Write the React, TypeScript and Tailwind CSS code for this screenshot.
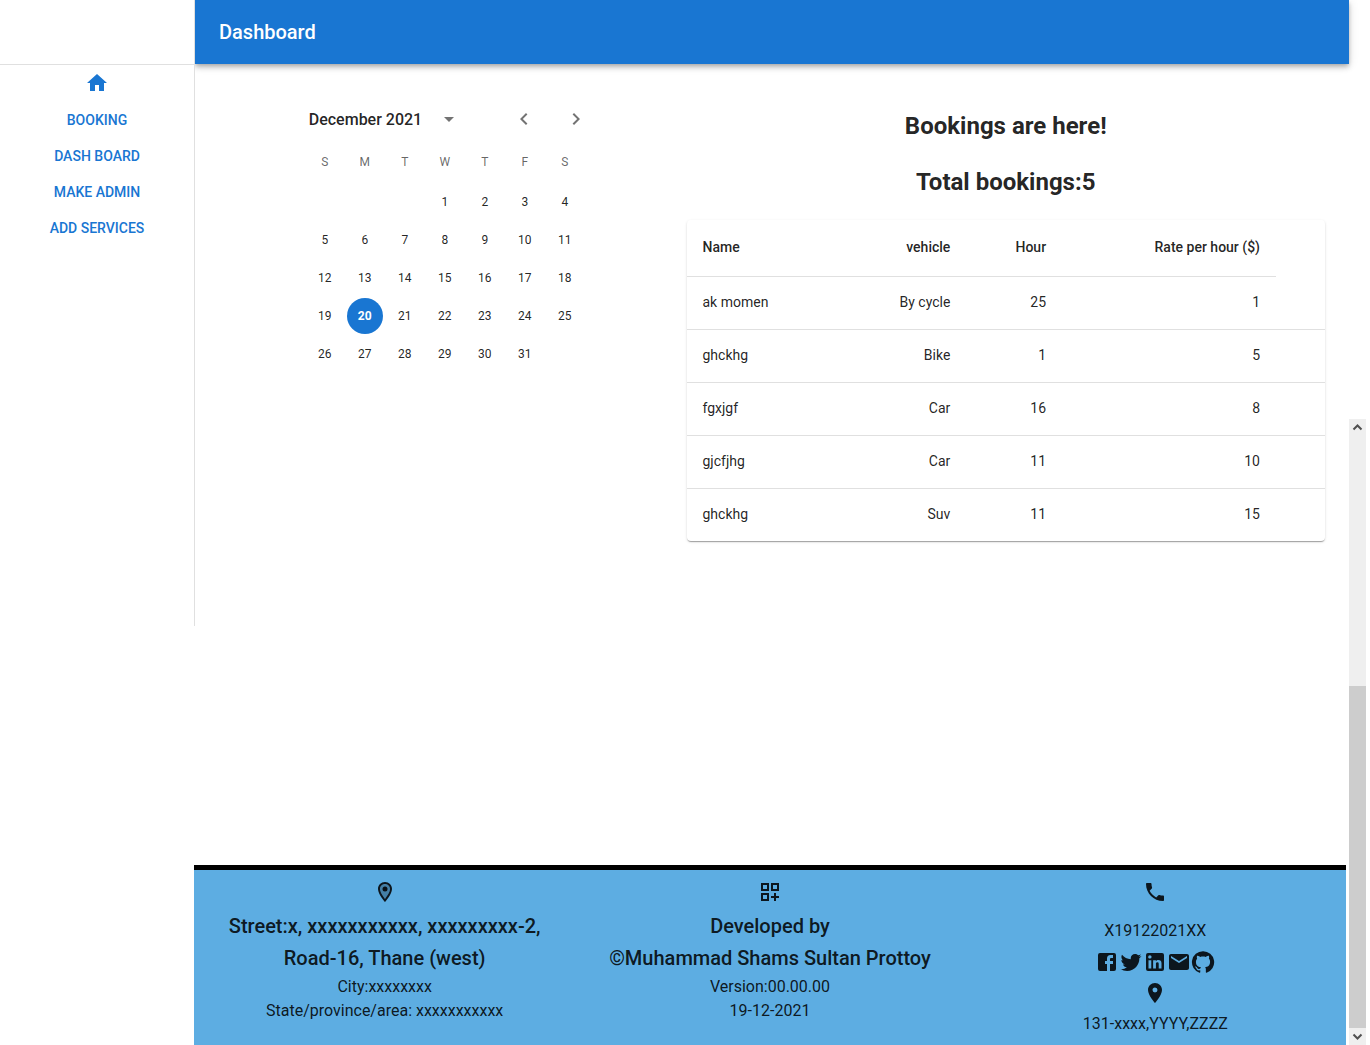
import type { ReactNode } from "react";
import {
  MdArrowDropDown,
  MdChevronLeft,
  MdChevronRight,
  MdEmail,
  MdHome,
  MdLocationOn,
  MdPhone,
} from "react-icons/md";

const navLinks = ["Booking", "Dash Board", "Make Admin", "Add Services"];

const weekdays = ["S", "M", "T", "W", "T", "F", "S"];
const leadingBlanks = 3;
const daysInMonth = 31;
const selectedDay = 20;

const bookings = [
  { name: "ak momen", vehicle: "By cycle", hour: 25, rate: 1 },
  { name: "ghckhg", vehicle: "Bike", hour: 1, rate: 5 },
  { name: "fgxjgf", vehicle: "Car", hour: 16, rate: 8 },
  { name: "gjcfjhg", vehicle: "Car", hour: 11, rate: 10 },
  { name: "ghckhg", vehicle: "Suv", hour: 11, rate: 15 },
];

const socialIcons = [
  {
    label: "Facebook",
    d: "M5 3h14a2 2 0 0 1 2 2v14a2 2 0 0 1-2 2H5a2 2 0 0 1-2-2V5a2 2 0 0 1 2-2m13 2h-2.5A3.5 3.5 0 0 0 12 8.5V11h-2v3h2v7h3v-7h3v-3h-3V9a1 1 0 0 1 1-1h2V5z",
  },
  {
    label: "Twitter",
    d: "M22.46 6c-.77.35-1.6.58-2.46.69.88-.53 1.56-1.37 1.88-2.38-.83.5-1.75.85-2.72 1.05C18.37 4.5 17.26 4 16 4c-2.35 0-4.27 1.92-4.27 4.29 0 .34.04.67.11.98C8.28 9.09 5.11 7.38 3 4.79c-.37.63-.58 1.37-.58 2.15 0 1.49.75 2.81 1.91 3.56-.71 0-1.37-.2-1.95-.5v.03c0 2.08 1.48 3.82 3.44 4.21a4.22 4.22 0 0 1-1.93.07 4.28 4.28 0 0 0 4 2.98 8.521 8.521 0 0 1-5.33 1.84c-.34 0-.68-.02-1.02-.06C3.44 20.29 5.7 21 8.12 21 16 21 20.33 14.46 20.33 8.79c0-.19 0-.37-.01-.56.84-.6 1.56-1.36 2.14-2.23z",
  },
  {
    label: "LinkedIn",
    d: "M19 3a2 2 0 0 1 2 2v14a2 2 0 0 1-2 2H5a2 2 0 0 1-2-2V5a2 2 0 0 1 2-2h14m-.5 15.5v-5.3a3.26 3.26 0 0 0-3.26-3.26c-.85 0-1.84.52-2.32 1.3v-1.11h-2.79v8.37h2.79v-4.93c0-.77.62-1.4 1.39-1.4a1.4 1.4 0 0 1 1.4 1.4v4.93h2.79M6.88 8.56a1.68 1.68 0 0 0 1.68-1.68c0-.93-.75-1.69-1.68-1.69a1.69 1.69 0 0 0-1.69 1.69c0 .93.76 1.68 1.69 1.68m1.39 9.94v-8.37H5.5v8.37h2.77z",
  },
];

const githubPath =
  "M12 1.27a11 11 0 00-3.48 21.46c.55.09.73-.28.73-.55v-1.84c-3.03.64-3.67-1.46-3.67-1.46-.55-1.29-1.28-1.65-1.28-1.65-.92-.65.1-.65.1-.65 1.1 0 1.73 1.1 1.73 1.1.92 1.65 2.57 1.2 3.21.92a2 2 0 01.64-1.47c-2.47-.27-5.04-1.19-5.04-5.5 0-1.1.46-2.1 1.2-2.84a3.76 3.76 0 010-2.93s.91-.28 3.11 1.1c1.8-.49 3.7-.49 5.5 0 2.1-1.38 3.02-1.1 3.02-1.1a3.76 3.76 0 01.1 2.93c.83.74 1.2 1.74 1.2 2.94 0 4.21-2.57 5.13-5.04 5.4.45.37.82.92.82 2.02v3.03c0 .27.1.64.73.55A11 11 0 0012 1.27";

function Icon({ children }: { children: ReactNode }) {
  return (
    <svg viewBox="0 0 24 24" fill="currentColor" className="size-6" aria-hidden="true">
      {children}
    </svg>
  );
}

function Sidebar() {
  return (
    <aside className="z-20 h-[626px] w-[195px] shrink-0 border-r border-[#e0e0e0] bg-white">
      <div className="h-[65px] border-b border-[#e0e0e0]" />
      <nav className="flex flex-col items-center pt-1.5 text-sm font-medium text-[#1976d2] uppercase">
        <a href="#home" aria-label="Home" className="mb-[7px]">
          <MdHome className="size-6" />
        </a>
        {navLinks.map((label) => (
          <a key={label} href="#" className="flex h-9 items-center">
            {label}
          </a>
        ))}
      </nav>
    </aside>
  );
}

function Calendar() {
  const days = Array.from({ length: daysInMonth }, (_, i) => i + 1);
  return (
    <section aria-label="Calendar" className="mx-auto mt-4 w-[280px]">
      <div className="flex h-[30px] items-center pl-1">
        <button type="button" className="flex items-center gap-[15px] text-base font-medium">
          <span className="pt-0.5">December 2021</span>
          <MdArrowDropDown className="size-6 text-black/55" />
        </button>
        <div className="-mr-[3px] ml-auto flex gap-7 text-black/55">
          <button type="button" aria-label="Previous month">
            <MdChevronLeft className="size-6" />
          </button>
          <button type="button" aria-label="Next month">
            <MdChevronRight className="size-6" />
          </button>
        </div>
      </div>
      <div className="mt-2 grid grid-cols-7 text-center text-xs leading-10 text-black/60">
        {weekdays.map((day, i) => (
          <span key={i}>{day}</span>
        ))}
      </div>
      <div className="mt-px grid grid-cols-7 justify-items-center text-xs">
        {days.map((day) => (
          <button
            key={day}
            type="button"
            aria-pressed={day === selectedDay}
            style={day === 1 ? { gridColumnStart: leadingBlanks + 1 } : undefined}
            className={
              day === selectedDay
                ? "my-px size-9 rounded-full bg-[#1976d2] font-bold text-white"
                : "my-px size-9 rounded-full"
            }
          >
            {day}
          </button>
        ))}
      </div>
    </section>
  );
}

function Bookings() {
  return (
    <section className="mt-5">
      <h2 className="text-center text-2xl leading-9 font-bold">Bookings are here!</h2>
      <h2 className="mt-5 text-center text-2xl leading-9 font-bold">
        Total bookings:{bookings.length}
      </h2>
      <div className="mt-5 rounded shadow-[0_2px_1px_-1px_rgba(0,0,0,0.2),0_1px_1px_0_rgba(0,0,0,0.14),0_1px_3px_0_rgba(0,0,0,0.12)]">
        <table className="w-full table-fixed border-separate border-spacing-0 text-sm">
          <colgroup>
            <col className="w-[22%]" />
            <col />
            <col className="w-[15%]" />
            <col className="w-[33.5%]" />
            <col className="w-[49px]" />
          </colgroup>
          <thead>
            <tr className="h-[57px] text-right *:border-b *:border-[#e0e0e0] *:px-4 *:pb-0.5 *:font-medium">
              <th scope="col" className="text-left">
                Name
              </th>
              <th scope="col">vehicle</th>
              <th scope="col">Hour</th>
              <th scope="col">Rate per hour ($)</th>
            </tr>
          </thead>
          <tbody>
            {bookings.map((row, i) => (
              <tr
                key={i}
                className="h-[53px] text-right *:border-b *:border-[#e0e0e0] *:px-4 *:pb-0.5 last:h-[52px] last:*:border-b-0"
              >
                <th scope="row" className="text-left font-normal">
                  {row.name}
                </th>
                <td>{row.vehicle}</td>
                <td>{row.hour}</td>
                <td>{row.rate}</td>
                <td />
              </tr>
            ))}
          </tbody>
        </table>
      </div>
    </section>
  );
}

function Footer() {
  return (
    <footer className="mr-[3px] ml-[194px] grid min-h-[180px] grid-cols-3 gap-x-1 border-t-[5px] border-black bg-[#5dade2] pt-2.5 text-center text-base">
      <div className="flex flex-col items-center">
        <Icon>
          <path
            d="M12 4C9.24 4 7 6.24 7 9c0 2.85 2.92 7.21 5 9.88 2.11-2.69 5-7 5-9.88 0-2.76-2.24-5-5-5z"
            opacity=".3"
          />
          <path d="M12 2C8.13 2 5 5.13 5 9c0 5.25 7 13 7 13s7-7.75 7-13c0-3.87-3.13-7-7-7zM7 9c0-2.76 2.24-5 5-5s5 2.24 5 5c0 2.88-2.88 7.19-5 9.88C9.92 16.21 7 11.85 7 9z" />
          <circle cx="12" cy="9" r="2.5" />
        </Icon>
        <h6 className="mt-1.5 mb-px text-xl leading-8 font-medium">
          Street:x, xxxxxxxxxxx, xxxxxxxxx-2,
          <br />
          Road-16, Thane (west)
        </h6>
        <p>City:xxxxxxxx</p>
        <p>State/province/area: xxxxxxxxxxx</p>
      </div>
      <div className="flex flex-col items-center">
        <Icon>
          <path d="M3 11h8V3H3v8zm2-6h4v4H5V5zM13 3v8h8V3h-8zm6 6h-4V5h4v4zM3 21h8v-8H3v8zm2-6h4v4H5v-4zM18 13h-2v3h-3v2h3v3h2v-3h3v-2h-3z" />
        </Icon>
        <h6 className="mt-1.5 mb-px text-xl leading-8 font-medium">
          Developed by
          <br />
          ©Muhammad Shams Sultan Prottoy
        </h6>
        <p>Version:00.00.00</p>
        <p>19-12-2021</p>
      </div>
      <div className="flex flex-col items-center">
        <MdPhone className="size-6" />
        <p className="mt-[15px]">X19122021XX</p>
        <div className="mt-[7px] flex">
          {socialIcons.map((icon) => (
            <a key={icon.label} href="#" aria-label={icon.label}>
              <Icon>
                <path d={icon.d} />
              </Icon>
            </a>
          ))}
          <a href="#" aria-label="Email">
            <MdEmail className="size-6" />
          </a>
          <a href="#" aria-label="GitHub">
            <Icon>
              <path d={githubPath} />
            </Icon>
          </a>
        </div>
        <MdLocationOn className="mt-[7px] size-6" />
        <p className="mt-[7px]">131-xxxx,YYYY,ZZZZ</p>
      </div>
    </footer>
  );
}

function ScrollRail() {
  return (
    <div
      aria-hidden="true"
      className="mt-auto mr-1 flex h-[626px] w-[17px] shrink-0 flex-col items-center bg-[#efefef] text-[#505050]"
    >
      <svg viewBox="0 0 17 17" className="size-[17px]" fill="none" stroke="currentColor" strokeWidth="2">
        <path d="M4.5 10.5l4-4 4 4" />
      </svg>
      <div className="mt-auto h-[342px] w-full bg-[#cdcdcd]" />
      <svg viewBox="0 0 17 17" className="size-[17px]" fill="none" stroke="currentColor" strokeWidth="2">
        <path d="M4.5 6.5l4 4 4-4" />
      </svg>
    </div>
  );
}

export default function App() {
  return (
    <div className="flex min-h-screen bg-white font-[Roboto,sans-serif] text-black/87">
      <div className="flex min-w-0 flex-1 flex-col justify-between">
        <div className="flex items-start">
          <Sidebar />
          <div className="min-w-0 flex-1">
            <header className="relative z-10 flex h-16 items-center bg-[#1976d2] px-6 text-white shadow-[0_2px_4px_-1px_rgba(0,0,0,0.2),0_4px_5px_0_rgba(0,0,0,0.14),0_1px_10px_0_rgba(0,0,0,0.12)]">
              <h1 className="text-xl font-medium">Dashboard</h1>
            </header>
            <main className="grid grid-cols-12 gap-4 p-6">
              <div className="col-span-5">
                <Calendar />
              </div>
              <div className="col-span-7">
                <Bookings />
              </div>
            </main>
          </div>
        </div>
        <Footer />
      </div>
      <ScrollRail />
    </div>
  );
}
